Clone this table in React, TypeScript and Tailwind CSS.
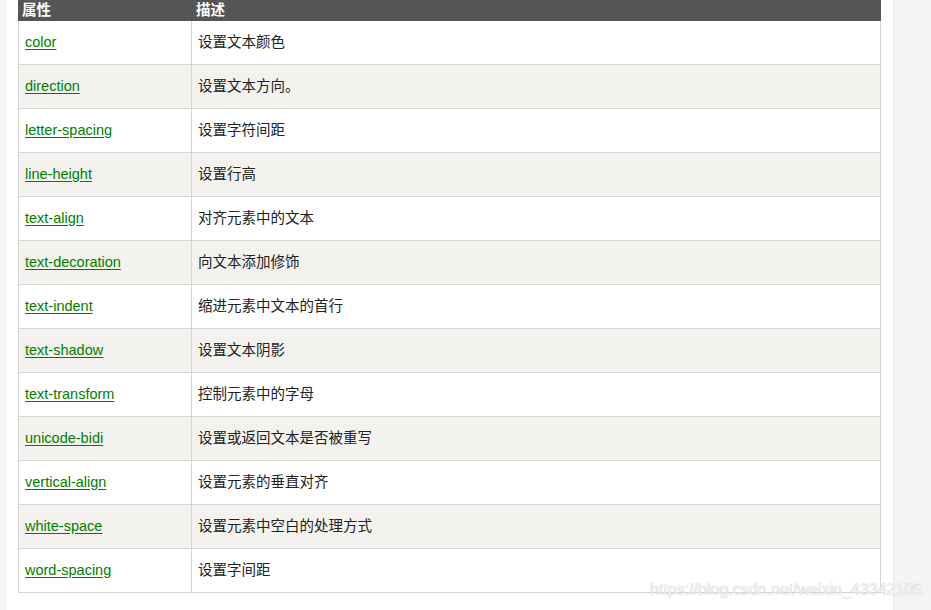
import React from "react";

const rows: [string, string][] = [
  ["color", "设置文本颜色"],
  ["direction", "设置文本方向。"],
  ["letter-spacing", "设置字符间距"],
  ["line-height", "设置行高"],
  ["text-align", "对齐元素中的文本"],
  ["text-decoration", "向文本添加修饰"],
  ["text-indent", "缩进元素中文本的首行"],
  ["text-shadow", "设置文本阴影"],
  ["text-transform", "控制元素中的字母"],
  ["unicode-bidi", "设置或返回文本是否被重写"],
  ["vertical-align", "设置元素的垂直对齐"],
  ["white-space", "设置元素中空白的处理方式"],
  ["word-spacing", "设置字间距"],
];

export default function App() {
  return (
    <div
      className="relative flex w-[931px] h-[610px] overflow-hidden bg-white text-[14.5px]"
      style={{ fontFamily: '"Liberation Sans", "Noto Sans CJK SC", sans-serif' }}
    >
      <div className="w-[7px] shrink-0 bg-[#f4f4f4]" />
      <div className="w-[886px] shrink-0 bg-white">
        <div className="ml-[11px] w-[863px]">
          <div className="flex h-[21px] items-center bg-[#555555] font-bold text-white leading-none">
            <div className="w-[174px] pl-[4px]">属性</div>
            <div className="flex-1 pl-[4px]">描述</div>
          </div>
          {rows.map(([prop, desc], i) => (
            <div
              key={prop}
              className={`flex h-[44px] border-x border-b border-[#d4d4d4] ${
                i % 2 === 1 ? "bg-[#f3f2ee]" : "bg-white"
              }`}
            >
              <div className="flex w-[173px] items-center border-r border-[#d4d4d4] pl-[6px]">
                <a href="#" className="text-[#008000] underline underline-offset-[2px]">
                  {prop}
                </a>
              </div>
              <div className="flex flex-1 items-center pl-[6px] text-[#222]">{desc}</div>
            </div>
          ))}
        </div>
      </div>
      <div className="flex-1 border-l border-[#ececec] bg-[#f4f4f4]" />
      <div
        className="absolute left-[650px] top-[580px] text-[16px] leading-[20px] text-[#f4f4f4]"
        style={{ textShadow: "0 0 1px #b0b0b0" }}
      >
        https://blog.csdn.net/weixin_43342105
      </div>
    </div>
  );
}
